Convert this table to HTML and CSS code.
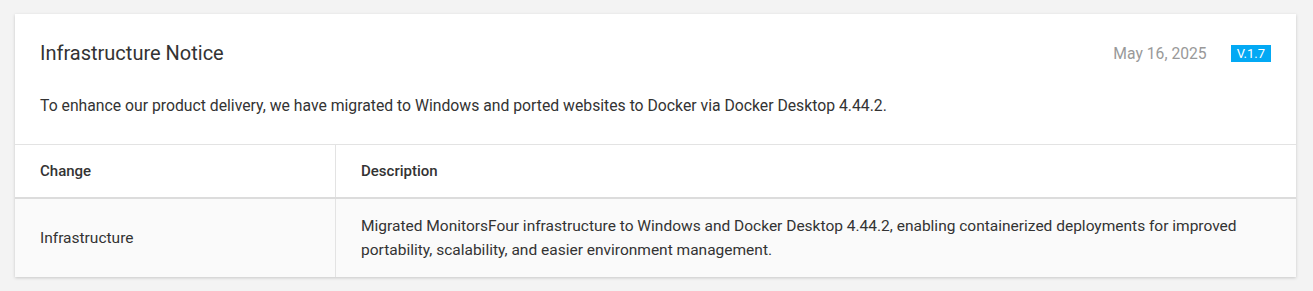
FILE: index.html
```html
<!DOCTYPE html>
<html>
<head>
<meta charset="utf-8">
<link rel="stylesheet" href="styles.css">
</head>
<body>
<div class="card">
  <div class="card-head">
    <div class="title-row">
      <h2 class="title">Infrastructure Notice</h2>
      <div class="meta">
        <span class="date">May 16, 2025</span>
        <span class="badge">V.1.7</span>
      </div>
    </div>
    <p class="intro">To enhance our product delivery, we have migrated to Windows and ported websites to Docker via Docker Desktop 4.44.2.</p>
  </div>
  <table class="changes">
    <thead>
      <tr><th class="col-change">Change</th><th>Description</th></tr>
    </thead>
    <tbody>
      <tr>
        <td class="col-change">Infrastructure</td>
        <td>Migrated MonitorsFour infrastructure to Windows and Docker Desktop 4.44.2, enabling containerized deployments for improved portability, scalability, and easier environment management.</td>
      </tr>
    </tbody>
  </table>
</div>
</body>
</html>
```

FILE: styles.css
```css
html, body { margin: 0; padding: 0; }
body {
  background: #f3f3f3;
  font-family: Roboto, "Liberation Sans", Arial, sans-serif;
  color: #333;
  padding: 14px 17px 14px 15px;
}
.card {
  background: #fff;
  box-shadow: 0 1px 3px rgba(0,0,0,0.18);
}
.card-head {
  padding: 28px 25px 28px 25px;
}
.title-row {
  display: flex;
  align-items: center;
  justify-content: space-between;
}
.title {
  margin: 0;
  font-size: 20px;
  font-weight: 400;
  line-height: 22px;
  color: #333;
}
.meta {
  display: flex;
  align-items: center;
  gap: 24px;
}
.date {
  font-size: 15.7px;
  color: #999;
}
.badge {
  background: #03a9f4;
  color: #fff;
  font-size: 13px;
  line-height: 17px;
  padding: 0 6px;
}
.intro {
  margin: 32px 0 0;
  font-size: 15.75px;
  line-height: 20px;
  color: #333;
}
.changes {
  width: 100%;
  border-collapse: collapse;
  font-size: 15.5px;
}
.changes th, .changes td {
  text-align: left;
  padding: 15px 25px;
  border-left: 1px solid #e3e3e3;
}
.changes th:first-child, .changes td:first-child { border-left: none; }
.changes th {
  font-size: 15px;
  font-weight: 500;
  line-height: 22px;
  border-top: 1px solid #e3e3e3;
  border-bottom: 2px solid #dcdcdc;
  color: #333;
}
.changes td {
  background: #fafafa;
  line-height: 24px;
  color: #333;
}
.col-change { width: 270px; }
```
